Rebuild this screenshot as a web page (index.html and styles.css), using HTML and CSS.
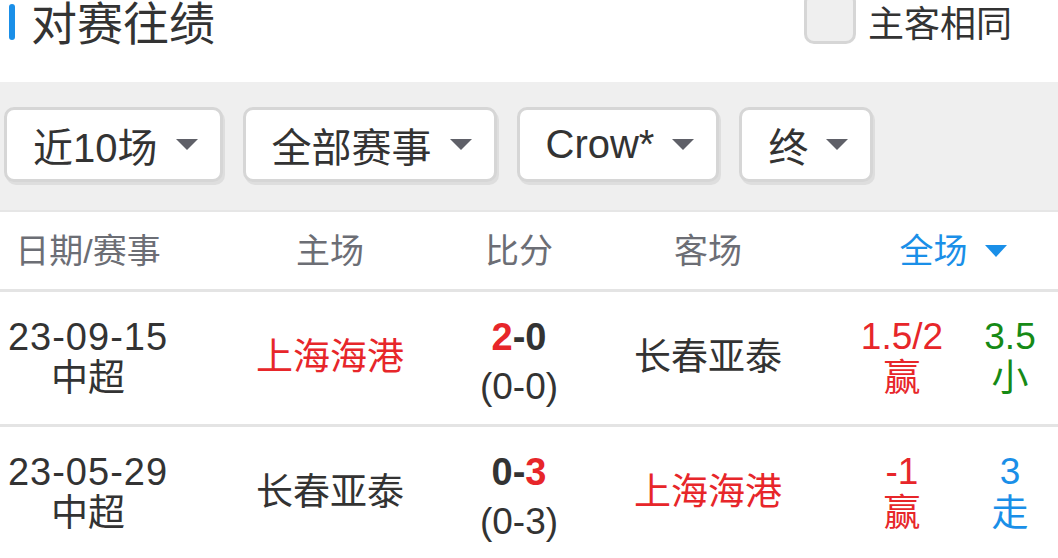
FILE: index.html
```html
<!DOCTYPE html>
<html>
  <head>
    <meta charset="utf-8">
    <title>对赛往绩</title>
    <link rel="stylesheet" href="styles.css">
  </head>
  <body>
    <div class="head">
      <div class="title">对赛往绩</div>
      <label class="same">
        <span class="check"></span>
        <span class="same-text">主客相同</span>
      </label>
    </div>

    <div class="filters">
      <div class="btn">近10场<i class="caret"></i></div>
      <div class="btn">全部赛事<i class="caret"></i></div>
      <div class="btn">Crow*<i class="caret"></i></div>
      <div class="btn">终<i class="caret"></i></div>
    </div>

    <div class="table">
      <div class="row thead">
        <div class="c date">日期/赛事</div>
        <div class="c">主场</div>
        <div class="c">比分</div>
        <div class="c">客场</div>
        <div class="c odds-h blue">全场<i class="caret caret-blue"></i></div>
      </div>

      <div class="row">
        <div class="c date"><span class="num">23-09-15</span><span>中超</span></div>
        <div class="c red">上海海港</div>
        <div class="c score"><b><span class="red">2</span>-0</b><span class="half">(0-0)</span></div>
        <div class="c">长春亚泰</div>
        <div class="c odd red"><span>1.5/2</span><span>赢</span></div>
        <div class="c odd2 green"><span>3.5</span><span>小</span></div>
      </div>

      <div class="row">
        <div class="c date"><span class="num">23-05-29</span><span>中超</span></div>
        <div class="c">长春亚泰</div>
        <div class="c score"><b>0-<span class="red">3</span></b><span class="half">(0-3)</span></div>
        <div class="c red">上海海港</div>
        <div class="c odd red"><span>-1</span><span>赢</span></div>
        <div class="c odd2 blue"><span>3</span><span>走</span></div>
      </div>
    </div>
  </body>
</html>
```

FILE: styles.css
```css
html, body {
  margin: 0;
  padding: 0;
  background-color: #fff;
  overflow: hidden;
  height: 100%;
  font-family: "Liberation Sans", "Noto Sans CJK SC", sans-serif;
  color: #333;
}

.head {
  display: flex;
  align-items: center;
  justify-content: space-between;
  height: 46px;
  padding: 0 46px 36px 9px;
}
.title {
  font-size: 46px;
  line-height: 46px;
  display: flex;
  align-items: center;
  padding-top: 2px;
}
.title:before {
  content: "";
  width: 6px;
  height: 36px;
  border-radius: 3px;
  background: #1a8fe8;
  margin-right: 16px;
  margin-top: -4px;
}
.same {
  display: flex;
  align-items: center;
  font-size: 36px;
  gap: 12px;
}
.check {
  width: 46px;
  height: 46px;
  border: 3px solid #d6d6d6;
  border-radius: 10px;
  background: #efefef;
  margin-bottom: 10px;
}
.same-text {
  margin-bottom: 4px;
}

.filters {
  background: #efefef;
  display: flex;
  gap: 20px;
  padding: 25px 4px 0 4px;
  height: 103px;
}
.btn {
  box-sizing: border-box;
  height: 75px;
  display: flex;
  align-items: center;
  padding: 0 22px 0 26px;
  background: #fff;
  border: 3px solid #d6d6d6;
  border-radius: 10px;
  box-shadow: 2px 3px 0 #dedede;
  font-size: 40px;
}
.caret {
  width: 0;
  height: 0;
  border-left: 11px solid transparent;
  border-right: 11px solid transparent;
  border-top: 11px solid #5f6068;
  margin-left: 18px;
}
.caret-blue {
  border-top: 12px solid #1a8fe8;
  margin-left: 17px;
}

.table {
  border-top: 2px solid #e6e6e6;
}
.row {
  display: grid;
  grid-template-columns: 236px 188px 190px 188px 154px 102px;
  height: 132px;
  border-bottom: 3px solid #e4e4e4;
  font-size: 37px;
}
.thead {
  height: 77px;
  font-size: 34px;
  color: #6c6e75;
}
.c {
  display: flex;
  flex-direction: column;
  align-items: center;
  justify-content: center;
  white-space: nowrap;
  line-height: 42px;
}
.date {
  padding-right: 60px;
}
.num {
  font-size: 38px;
  letter-spacing: 1px;
}
.thead .odds-h {
  grid-column: span 2;
  flex-direction: row;
  padding-left: 46px;
  color: #1a8fe8;
}
.score {
  padding-top: 8px;
}
.score b {
  font-size: 38px;
}
.half {
  margin-top: 8px;
}
.odd {
  padding-left: 46px;
}
.odd2 {
  padding-left: 6px;
}

.red { color: #e7262a; }
.green { color: #168a16; }
.blue { color: #1a8fe8; }
```
